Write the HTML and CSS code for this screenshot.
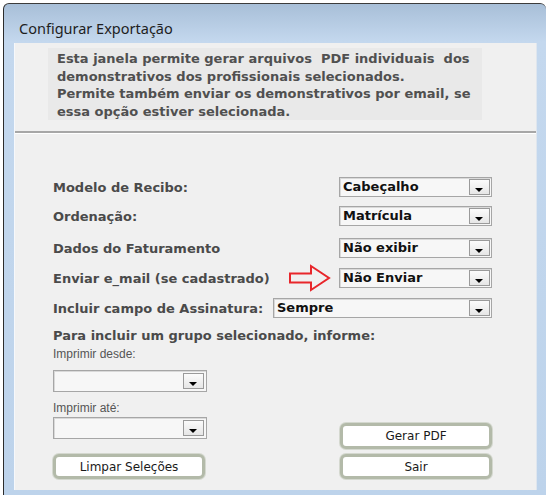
FILE: index.html
```html
<!DOCTYPE html>
<html lang="pt-BR">
<head>
    <meta charset="UTF-8">
    <meta name="viewport" content="width=device-width, initial-scale=1.0">
    <title>Configurar Exportação</title>
    <link rel="stylesheet" href="styles.css">
</head>
<body>

    <div class="window">
        <div class="titlebar">Configurar Exportação</div>

        <div class="client">
            <div class="intro">
                <div class="desc">
                    <p>Esta janela permite gerar arquivos&nbsp; PDF individuais&nbsp; dos</p>
                    <p>demonstrativos dos profissionais selecionados.</p>
                    <p>Permite também enviar os demonstrativos por email, se</p>
                    <p>essa opção estiver selecionada.</p>
                </div>
            </div>

            <div class="form">
                <div class="row">
                    <span class="label">Modelo de Recibo:</span>
                    <div class="select"><span class="value">Cabeçalho</span><span class="drop"></span></div>
                </div>
                <div class="row">
                    <span class="label">Ordenação:</span>
                    <div class="select"><span class="value">Matrícula</span><span class="drop"></span></div>
                </div>
                <div class="row">
                    <span class="label">Dados do Faturamento</span>
                    <div class="select"><span class="value">Não exibir</span><span class="drop"></span></div>
                </div>
                <div class="row">
                    <span class="label">Enviar e_mail (se cadastrado)</span>
                    <!-- seta de destaque -->
                    <svg class="arrow" width="44" height="30" viewBox="0 0 44 30">
                        <path d="M2 10.5 H23 V3 L41 15 L23 27 V19.5 H2 Z" fill="none" stroke="#e8262b" stroke-width="2"/>
                    </svg>
                    <div class="select"><span class="value">Não Enviar</span><span class="drop"></span></div>
                </div>
                <div class="row">
                    <span class="label">Incluir campo de Assinatura:</span>
                    <div class="select wide"><span class="value">Sempre</span><span class="drop"></span></div>
                </div>

                <p class="group-title">Para incluir um grupo selecionado, informe:</p>

                <div class="bottom">
                    <div class="range">
                        <span class="small-label">Imprimir desde:</span>
                        <div class="combo"><span class="value"></span><span class="drop"></span></div>
                        <span class="small-label until">Imprimir até:</span>
                        <div class="combo"><span class="value"></span><span class="drop"></span></div>
                        <button class="button clear">Limpar Seleções</button>
                    </div>
                    <div class="actions">
                        <button class="button">Gerar PDF</button>
                        <button class="button">Sair</button>
                    </div>
                </div>
            </div>
        </div>
    </div>

</body>
</html>
```

FILE: styles.css
```css
body {
    margin: 0;
    background-color: #ffffff;
    font-family: "DejaVu Sans", Verdana, sans-serif;
}
.window {
    margin: 3px 0 0 3px;
    width: 523px;
    height: 486px;
    padding: 0 9px 5px 10px;
    border-top: 1px solid #3c3c3c;
    border-left: 1px solid #2c2c2c;
    border-radius: 6px 6px 0 0;
    background: linear-gradient(#a8bfd8, #c4d8ee 38px, #bdd3eb);
}
.titlebar {
    height: 39px;
    padding-top: 9px;
    box-sizing: border-box;
    display: flex;
    align-items: center;
    padding-left: 5px;
    font-family: "Noto Sans", sans-serif;
    font-size: 14.5px;
    color: #1e1e1e;
}
.client {
    height: 447px;
    background-color: #f0f0f0;
    border-left: 1px solid #f6f8fb;
    border-right: 1px solid #dfe6ee;
    box-sizing: border-box;
}
.intro {
    height: 90px;
    box-sizing: border-box;
    padding: 5px 0 0 33px;
    border-bottom: 2px solid #a7a7a7;
    box-shadow: 0 1px 0 #ffffff;
}
.desc {
    width: 434px;
    height: 72px;
    box-sizing: border-box;
    padding: 2px 0 0 9px;
    background-color: #e9e9e9;
    font-size: 13px;
    font-weight: bold;
    color: #505050;
}
.desc p {
    margin: 0;
    line-height: 17.5px;
    white-space: nowrap;
}
.form {
    padding: 44px 44px 0 38px;
}
.row {
    display: flex;
    align-items: center;
    height: 20px;
    margin-bottom: 10px;
}
.row:nth-child(1) {
    margin-bottom: 9px;
}
.row:nth-child(2) {
    margin-bottom: 12px;
}
.label {
    flex: 1;
    font-size: 13px;
    font-weight: bold;
    color: #4a4a4a;
    white-space: nowrap;
}
.arrow {
    margin: -5px 7px -5px 0;
}
.select, .combo {
    display: flex;
    align-items: stretch;
    width: 153px;
    height: 20px;
    box-sizing: border-box;
    border: 1px solid #a6a6a6;
    box-shadow: inset 1px 1px 0 #d9d9d9;
    background-color: #f7f7f7;
}
.select.wide {
    width: 219px;
}
.value {
    flex: 1;
    padding-left: 3px;
    font-size: 13px;
    font-weight: bold;
    color: #111111;
    line-height: 18px;
}
.drop {
    position: relative;
    width: 19px;
    margin: 1px 1px 1px 0;
    border: 1px solid #9a9a9a;
    background: linear-gradient(#fbfbfb, #e6e6e6);
}
.drop::after {
    content: "";
    position: absolute;
    left: 5px;
    bottom: 2px;
    border-left: 4.5px solid transparent;
    border-right: 4.5px solid transparent;
    border-top: 4px solid #000000;
}
.group-title {
    margin: 3px 0 0;
    font-size: 13px;
    font-weight: bold;
    color: #4a4a4a;
    line-height: 16px;
}
.bottom {
    display: flex;
    justify-content: space-between;
    align-items: flex-end;
}
.range {
    display: flex;
    flex-direction: column;
    width: 154px;
}
.small-label {
    margin-top: 3px;
    font-family: "Liberation Sans", Arial, sans-serif;
    font-size: 12px;
    color: #555555;
    line-height: 15px;
}
.small-label.until {
    margin-top: 9px;
}
.combo {
    width: 154px;
    height: 22px;
    margin-top: 8px;
}
.small-label.until + .combo {
    margin-top: 1px;
}
.combo .drop {
    margin: 2px 2px 2px 0;
}
.actions {
    display: flex;
    flex-direction: column;
    gap: 5px;
}
.button {
    width: 152px;
    height: 25px;
    padding: 0;
    border: 3px solid #b3baa9;
    border-radius: 6px;
    box-shadow: 0 0 0 1px #d4d8cf;
    background-color: #ffffff;
    font-family: "DejaVu Sans", sans-serif;
    font-size: 12px;
    color: #1a1a1a;
    cursor: pointer;
}
.button.clear {
    margin-top: 15px;
}
.actions .button:first-child {
    height: 26px;
}
```
